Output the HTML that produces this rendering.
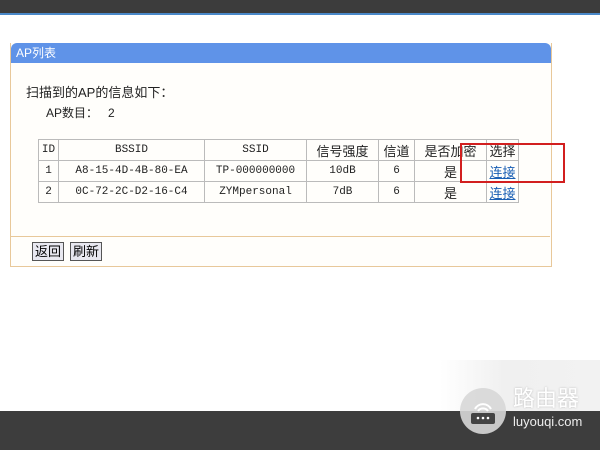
<!DOCTYPE html>
<html><head><meta charset="utf-8"><style>
body{margin:0;width:600px;height:450px;position:relative;background:#fff;overflow:hidden;font-family:"Liberation Serif","Noto Serif CJK SC",serif;}
.top{position:absolute;left:0;top:0;width:600px;height:13px;background:#3c3c3c;border-bottom:2px solid #4a88c8;}
.panel{position:absolute;left:10px;top:43px;width:540px;height:223px;border:1px solid #e8c89a;border-top:none;background:#fffefb;}
.hdr{height:20px;background:#5f93e8;color:#fff;font-size:12px;line-height:20px;padding-left:5px;border-radius:6px 6px 0 0;font-family:"Liberation Sans","Noto Sans CJK SC",sans-serif;}
.t1{position:absolute;left:26px;top:82px;font-size:13px;color:#222;font-family:"Liberation Sans","Noto Sans CJK SC",sans-serif;}
.t2{position:absolute;left:46px;top:104px;font-size:12px;color:#222;font-family:"Liberation Sans","Noto Sans CJK SC",sans-serif;}
table{position:absolute;left:38px;top:139px;border-collapse:collapse;font-size:11px;color:#222;font-family:"Liberation Mono",monospace;}
td{border:1px solid #bbb;height:20px;padding:0;text-align:center;}
td.c{font-family:"Liberation Sans","Noto Sans CJK SC",sans-serif;font-size:13px}
a{color:#1a5fb4;text-decoration:underline;font-family:"Liberation Sans","Noto Sans CJK SC",sans-serif;font-size:13px}
.sep{position:absolute;left:11px;top:236px;width:539px;border-top:1px solid #e8c89a;}
.btn{position:absolute;top:242px;height:17px;border:1px solid #555;background:#e8e8f0;font-size:13px;line-height:17px;padding:0 2px;font-family:"Liberation Sans","Noto Sans CJK SC",sans-serif;}
.red{position:absolute;left:460px;top:143px;width:101px;height:36px;border:2px solid #d21f1f;}
.bot{position:absolute;left:0;top:411px;width:600px;height:39px;background:#3d3d3d;}
.glow{position:absolute;left:440px;top:360px;width:160px;height:51px;background:linear-gradient(90deg,rgba(240,240,240,0),#f0f0f0 40%,#f2f2f2);}
.logo{position:absolute;left:460px;top:388px;width:46px;height:46px;border-radius:50%;background:rgba(215,215,215,.9);}
.lt{position:absolute;left:513px;top:387px;color:#fff;font-family:"Liberation Sans","Noto Sans CJK SC",sans-serif;font-size:22px;line-height:24px;text-shadow:0 0 2px #bbb;}
.lu{position:absolute;left:513px;top:414px;color:#eee;font-family:"Liberation Sans",sans-serif;font-size:13px;}
</style></head><body>
<div class="top"></div>
<div class="panel"><div class="hdr">AP列表</div></div>
<div class="t1">扫描到的AP的信息如下：</div>
<div class="t2">AP数目：&nbsp;&nbsp;&nbsp;2</div>
<table>
<tr><td style="width:19px">ID</td><td style="width:145px">BSSID</td><td style="width:101px">SSID</td><td class="c" style="width:71px">信号强度</td><td class="c" style="width:35px">信道</td><td class="c" style="width:71px">是否加密</td><td class="c" style="width:31px">选择</td></tr>
<tr><td>1</td><td>A8-15-4D-4B-80-EA</td><td>TP-000000000</td><td>10dB</td><td>6</td><td class="c">是</td><td><a>连接</a></td></tr>
<tr><td>2</td><td>0C-72-2C-D2-16-C4</td><td>ZYMpersonal</td><td>7dB</td><td>6</td><td class="c">是</td><td><a>连接</a></td></tr>
</table>
<div class="red"></div>
<div class="sep"></div>
<div class="btn" style="left:32px">返回</div>
<div class="btn" style="left:70px">刷新</div>
<div class="glow"></div>
<div class="bot"></div>
<div class="logo"><svg width="46" height="46"><path d="M15 21a9 9 0 0 1 16 0M18 23a6 6 0 0 1 10 0" stroke="#fff" stroke-width="2" fill="none"/><rect x="11" y="25" width="24" height="11" rx="2" fill="#444"/><circle cx="18" cy="30" r="1.3" fill="#fff"/><circle cx="23" cy="30" r="1.3" fill="#fff"/><circle cx="28" cy="30" r="1.3" fill="#fff"/></svg></div>
<div class="lt">路由器</div>
<div class="lu">luyouqi.com</div>
</body></html>
